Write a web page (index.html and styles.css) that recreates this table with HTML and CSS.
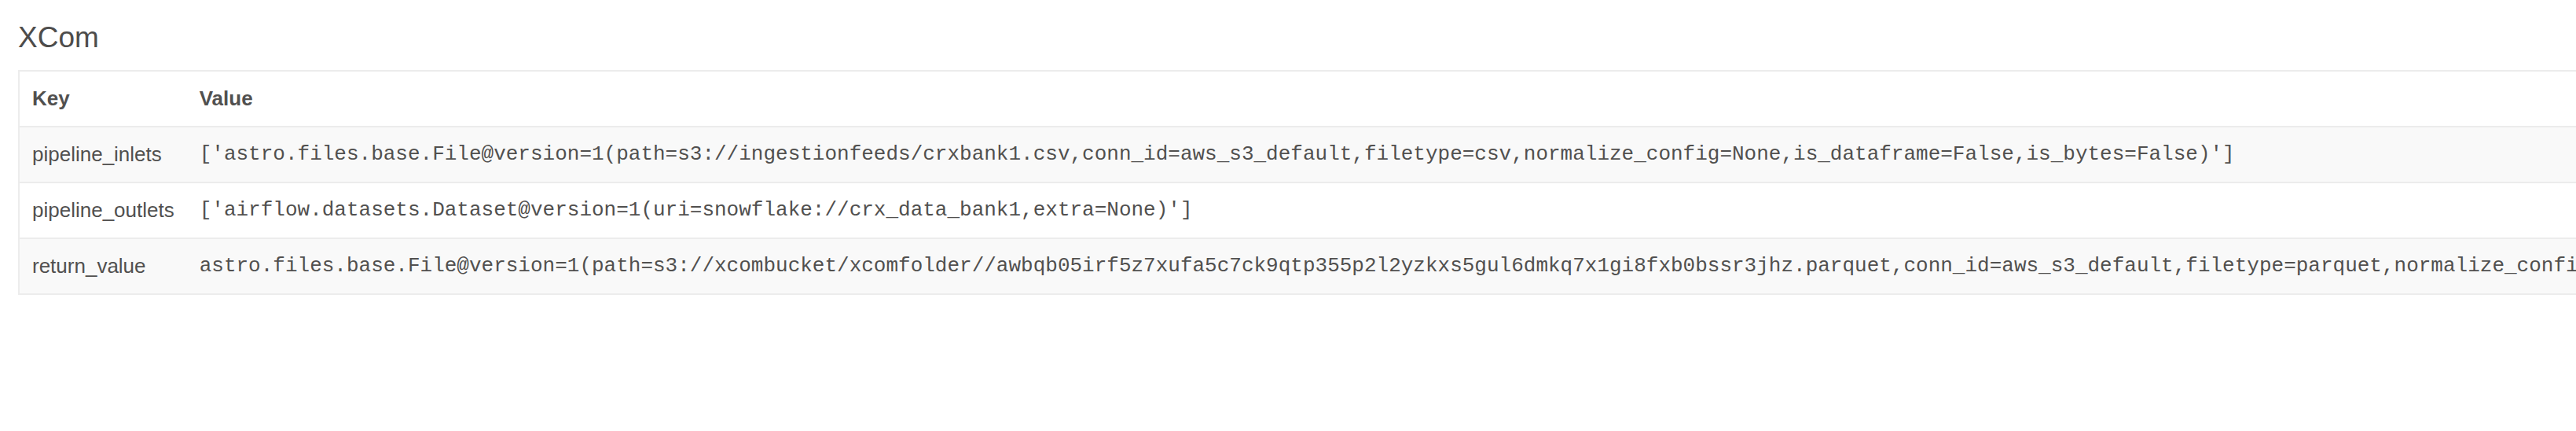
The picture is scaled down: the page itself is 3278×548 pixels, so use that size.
FILE: index.html
```html
<!DOCTYPE html>
<html lang="en">
<head>
<meta charset="utf-8">
<title>XCom</title>
<link rel="stylesheet" href="styles.css">
</head>
<body>
<main class="page">
  <h4 class="title">XCom</h4>
  <div class="table-wrap">
    <table class="xcom-table">
      <thead>
        <tr>
          <th class="col-key">Key</th>
          <th class="col-value">Value</th>
        </tr>
      </thead>
      <tbody>
        <tr class="striped">
          <td class="key">pipeline_inlets</td>
          <td class="value">['astro.files.base.File@version=1(path=s3://ingestionfeeds/crxbank1.csv,conn_id=aws_s3_default,filetype=csv,normalize_config=None,is_dataframe=False,is_bytes=False)']</td>
        </tr>
        <tr>
          <td class="key">pipeline_outlets</td>
          <td class="value">['airflow.datasets.Dataset@version=1(uri=snowflake://crx_data_bank1,extra=None)']</td>
        </tr>
        <tr class="striped">
          <td class="key">return_value</td>
          <td class="value">astro.files.base.File@version=1(path=s3://xcombucket/xcomfolder//awbqb05irf5z7xufa5c7ck9qtp355p2l2yzkxs5gul6dmkq7x1gi8fxb0bssr3jhz.parquet,conn_id=aws_s3_default,filetype=parquet,normalize_config=None,is_dataframe=True,is_bytes=False)</td>
        </tr>
      </tbody>
    </table>
  </div>
</main>
</body>
</html>
```

FILE: styles.css
```css
html {
  overflow: hidden;
}

body {
  margin: 0;
  background: #ffffff;
  color: #51504f;
  font-family: "Liberation Sans", Arial, Helvetica, sans-serif;
  font-size: 26px;
  line-height: 1.42857;
}

.page {
  padding: 0 0 0 23px;
}

.title {
  margin: 28px 0 20px;
  font-size: 37px;
  font-weight: 400;
  line-height: 1.1;
  color: #4d4c4b;
}

.table-wrap {
  display: inline-block;
  border: 2px solid #ececec;
}

.xcom-table {
  border-collapse: collapse;
  border-spacing: 0;
}

.xcom-table th,
.xcom-table td {
  padding: 16px;
  line-height: 37px;
  text-align: left;
  vertical-align: top;
  white-space: nowrap;
}

.xcom-table th {
  font-weight: 700;
}

.xcom-table tbody td {
  border-top: 2px solid #ececec;
}

.xcom-table .striped td {
  background: #f9f9f9;
}

.xcom-table .value {
  font-family: "Liberation Mono", "Courier New", monospace;
  font-size: 26px;
}
```
